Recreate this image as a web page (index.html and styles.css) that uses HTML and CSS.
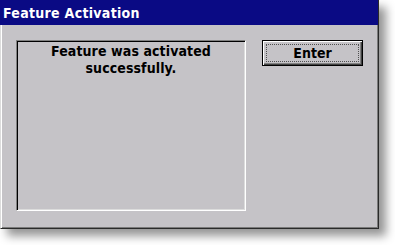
FILE: index.html
```html
<!DOCTYPE html>
<html>
<head>
<meta charset="utf-8">
<link rel="stylesheet" href="styles.css">
</head>
<body>
<div class="window">
  <div class="titlebar">Feature Activation</div>
  <div class="content">
    <div class="textbox">Feature was activated<br>successfully.</div>
    <div class="button"><div class="focus">Enter</div></div>
  </div>
</div>
</body>
</html>
```
FILE: styles.css
```css
html, body {
  margin: 0;
  padding: 0;
  background: #ffffff;
}
body {
  width: 395px;
  height: 245px;
  overflow: hidden;
  font-family: "DejaVu Sans Condensed", "DejaVu Sans", sans-serif;
  font-stretch: condensed;
  font-weight: bold;
  font-size: 14px;
}
.window {
  width: 379px;
  height: 229px;
  box-sizing: border-box;
  background: #c5c3c7;
  border-left: 1px solid #dcdcdc;
  border-right: 1px solid #2a2a2a;
  border-bottom: 1px solid #2a2a2a;
  box-shadow: inset 1px 0 0 #ffffff, inset -1px -1px 0 #7a7a7a, 7px 7px 9px rgba(0, 0, 0, 0.42);
  display: flex;
  flex-direction: column;
}
.titlebar {
  height: 25px;
  box-sizing: border-box;
  padding: 1px 0 0 3px;
  line-height: 24px;
  background: #0a0a84;
  color: #ffffff;
  margin-left: -1px;
  letter-spacing: 0.3px;
}
.content {
  display: flex;
  align-items: flex-start;
  padding: 15px 0 0 15px;
}
.textbox {
  width: 230px;
  height: 171px;
  box-sizing: border-box;
  border: 1px solid;
  border-color: #808080 #ffffff #ffffff #808080;
  box-shadow: inset 1px 1px 0 #000000, inset -1px -1px 0 #dcdcdc;
  padding-top: 2px;
  line-height: 17px;
  text-align: center;
  color: #000000;
  letter-spacing: 0.1px;
}
.button {
  margin-left: 16px;
  width: 101px;
  height: 26px;
  box-sizing: border-box;
  border: 1px solid #000000;
  box-shadow: inset 1px 1px 0 #ffffff, inset -1px -1px 0 #404040, inset -2px -2px 0 #808080;
  display: flex;
  padding: 3px;
}
.focus {
  flex: 1;
  border: 1px dotted #505050;
  display: flex;
  align-items: center;
  justify-content: center;
  color: #000000;
  line-height: 16px;
}
```
